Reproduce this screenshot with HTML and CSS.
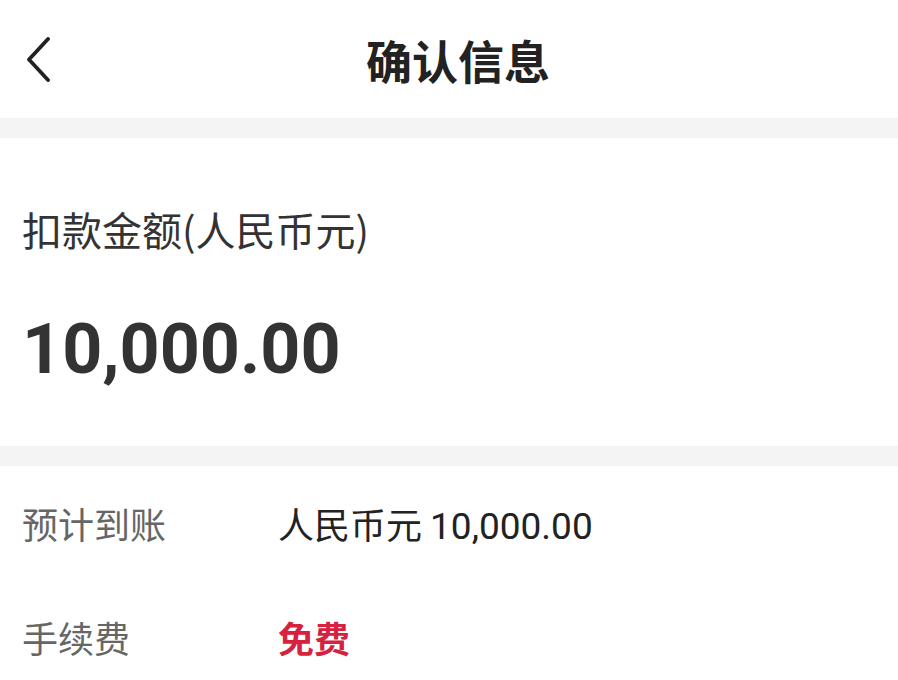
FILE: index.html
```html
<!DOCTYPE html>
<html lang="zh-CN">
<head>
<meta charset="utf-8">
<title>确认信息</title>
<link rel="stylesheet" href="styles.css">
</head>
<body>
<div class="page">
  <header class="nav">
    <span class="back">
      <svg width="28" height="46" viewBox="0 0 28 46"><path d="M24 2 L5 22.5 L24 43" fill="none" stroke="#222" stroke-width="3.8" stroke-linecap="round" stroke-linejoin="round"/></svg>
    </span>
    <h1 class="title">确认信息</h1>
  </header>
  <div class="gap"></div>
  <section class="amount">
    <div class="amount-label">扣款金额(人民币元)</div>
    <div class="amount-value">10,000.00</div>
  </section>
  <div class="gap"></div>
  <section class="details">
    <div class="row">
      <span class="key">预计到账</span>
      <span class="val">人民币元 <span class="num">10,000.00</span></span>
    </div>
    <div class="row">
      <span class="key">手续费</span>
      <span class="val free">免费</span>
    </div>
  </section>
</div>
</body>
</html>
```
FILE: styles.css
```css
html, body {
  margin: 0;
  padding: 0;
  background: #ffffff;
}
body {
  font-family: "Noto Sans CJK SC", "Noto Sans", sans-serif;
  color: #222;
  width: 898px;
  height: 680px;
  overflow: hidden;
}
.page {
  display: flex;
  flex-direction: column;
}
.nav {
  height: 118px;
  display: flex;
  align-items: center;
  justify-content: center;
  position: relative;
}
.back {
  position: absolute;
  left: 24px;
  top: 37px;
  display: block;
  line-height: 0;
}
.title {
  margin: 0 0 0 18px;
  font-size: 46px;
  font-weight: 700;
  color: #222;
  line-height: 1;
}
.gap {
  height: 20px;
  background: #f4f4f4;
}
.amount {
  height: 308px;
  box-sizing: border-box;
  padding: 0 22px;
  display: flex;
  flex-direction: column;
}
.amount-label {
  margin-top: 63px;
  font-size: 40px;
  line-height: 56px;
  color: #333;
}
.amount-value {
  margin-top: 52px;
  font-family: Roboto, "Noto Sans CJK SC", sans-serif;
  font-size: 70px;
  font-weight: 700;
  line-height: 80px;
  color: #333;
}
.details {
  display: flex;
  flex-direction: column;
}
.row {
  height: 114px;
  display: flex;
  align-items: center;
  padding: 0 22px;
  font-size: 36px;
}
.key {
  width: 256px;
  color: #666;
}
.val {
  color: #222;
}
.num {
  font-family: Roboto, "Noto Sans CJK SC", sans-serif;
  font-size: 37px;
}
.free {
  color: #d7223f;
  font-weight: 700;
}
```
